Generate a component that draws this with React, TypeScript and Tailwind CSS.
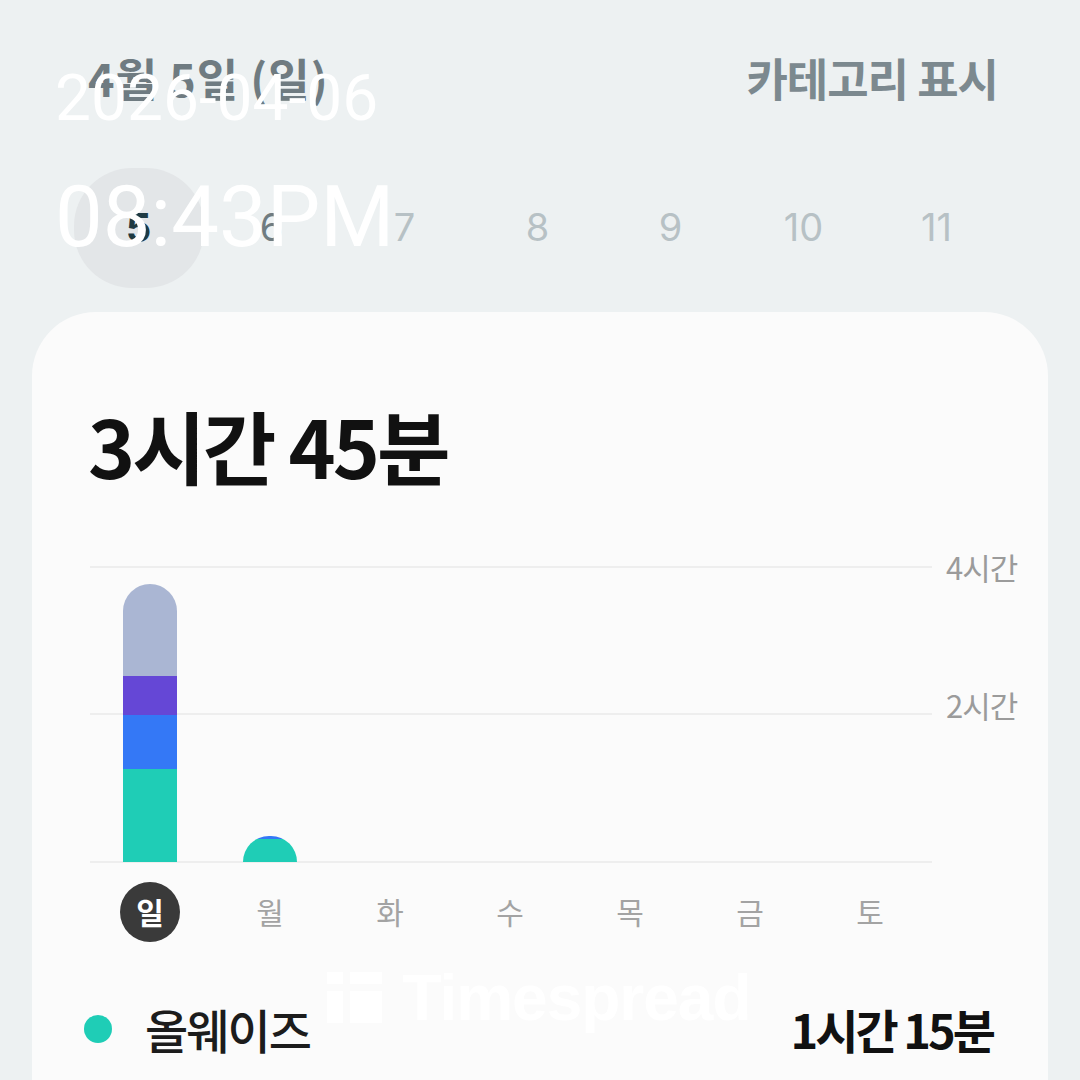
import React from 'react';

const KR = { fontFamily: '"Noto Sans CJK KR", "Noto Sans", sans-serif' };

const dates = ['5', '6', '7', '8', '9', '10', '11'];
const weekdays = ['일', '월', '화', '수', '목', '금', '토'];

const sunday = [
  { color: 'bg-[#1fcdb6]', h: 93 },
  { color: 'bg-[#3478f6]', h: 54 },
  { color: 'bg-[#6547d6]', h: 39 },
  { color: 'bg-[#aab6d3]', h: 92 },
];

export default function App() {
  return (
    <div className="relative w-[1080px] h-[1080px] overflow-hidden bg-[#edf1f2]" style={KR}>
      {/* Header */}
      <div className="flex items-center justify-between pl-[88px] pr-[82px] pt-[44px]">
        <span className="text-[45px] font-bold text-[#6f7b81] tracking-[1px]">4월 5일 (일)</span>
        <span className="text-[45px] font-bold text-[#7c898f] tracking-[-1px]">카테고리 표시</span>
      </div>

      {/* Date strip */}
      <div className="grid grid-cols-7 w-[931px] ml-[72px] mt-[56px]">
        {dates.map((d, i) => (
          <div key={d} className="flex h-[120px] items-center justify-center">
            {i === 0 ? (
              <div className="flex h-[120px] w-[130px] items-center justify-center rounded-[58px] bg-[#e3e6e8]">
                <span className="text-[40px] font-bold text-[#1f3a42]" style={{ fontFamily: 'Inter, sans-serif' }}>{d}</span>
              </div>
            ) : (
              <span
                className={`text-[38px] ${i === 1 ? 'text-[#6f7c81]' : 'text-[#b7c1c5]'}`}
                style={{ fontFamily: 'Inter, sans-serif' }}
              >
                {d}
              </span>
            )}
          </div>
        ))}
      </div>

      {/* Card */}
      <div className="mx-[32px] mt-[24px] h-[800px] rounded-t-[64px] bg-[#fbfbfb] pl-[56px] pr-[28px] pt-[92px]">
        <div className="text-[80px] font-bold leading-none text-[#111] tracking-[-3px]">3시간 45분</div>

        {/* Chart */}
        <div className="mt-[82px] flex">
          <div className="grid w-[842px] ml-[2px]">
            <div className="col-start-1 row-start-1 flex h-[297px] flex-col justify-between">
              <div className="h-[2px] bg-[#eeeeee]" />
              <div className="h-[2px] bg-[#eeeeee]" />
              <div className="h-[2px] bg-[#eeeeee]" />
            </div>
            <div className="col-start-1 row-start-1 grid h-[296px] grid-cols-7 items-end">
              <div className="flex justify-center">
                <div className="flex w-[54px] flex-col-reverse overflow-hidden rounded-t-full">
                  {sunday.map((s, i) => (
                    <div key={i} className={s.color} style={{ height: s.h }} />
                  ))}
                </div>
              </div>
              <div className="flex justify-center">
                <div className="flex h-[26px] w-[54px] flex-col overflow-hidden rounded-t-full">
                  <div className="h-[3px] bg-[#3478f6]" />
                  <div className="flex-1 bg-[#1fcdb6]" />
                </div>
              </div>
            </div>
          </div>
          <div className="ml-[14px] flex h-[297px] flex-col justify-between text-[31px] text-[#9b9b9b] tracking-[-1px]">
            <span className="-mt-[19px] leading-[40px]">4시간</span>
            <span className="leading-[40px]">2시간</span>
            <span className="leading-[40px] invisible">0</span>
          </div>
        </div>

        {/* Weekday labels */}
        <div className="mt-[19px] grid w-[840px] grid-cols-7 ml-[2px]">
          {weekdays.map((w, i) => (
            <div key={w} className="flex justify-center">
              {i === 0 ? (
                <div className="flex h-[60px] w-[60px] items-center justify-center rounded-full bg-[#3a3a3a]">
                  <span className="text-[30px] font-bold text-white">{w}</span>
                </div>
              ) : (
                <span className="flex h-[60px] items-center text-[30px] text-[#a3a3a3]">{w}</span>
              )}
            </div>
          ))}
        </div>

        {/* Watermark */}
        <div className="mt-[24px] flex items-center justify-center gap-[20px] pr-[30px] text-white">
          <div className="flex gap-[7px]">
            <div className="flex flex-col gap-[7px]">
              <div className="h-[12px] w-[16px] bg-white" />
              <div className="h-[32px] w-[16px] bg-white" />
            </div>
            <div className="flex flex-col gap-[7px]">
              <div className="h-[12px] w-[32px] bg-white" />
              <div className="h-[32px] w-[32px] bg-white" />
            </div>
          </div>
          <span className="text-[64px] font-bold leading-none tracking-[-1px]" style={{ fontFamily: '"Liberation Sans", sans-serif' }}>Timespread</span>
        </div>

        {/* Legend row */}
        <div className="-mt-[36px] flex items-center justify-between pr-[27px]">
          <div className="flex items-center gap-[33px] -ml-[4px]">
            <div className="h-[28px] w-[28px] rounded-full bg-[#1fcdb6]" />
            <span className="text-[47px] font-medium text-[#1c1c1c] tracking-[-2px]">올웨이즈</span>
          </div>
          <span className="text-[47px] font-bold text-[#111] tracking-[-3px]">1시간 15분</span>
        </div>
      </div>

      {/* Timestamp overlay */}
      <div className="absolute left-[55px] top-[67px] text-white" style={{ fontFamily: 'Roboto, sans-serif' }}>
        <div className="text-[64px] leading-none">2026-04-06</div>
        <div className="mt-[44px] text-[85px] leading-none">08:43PM</div>
      </div>
    </div>
  );
}
